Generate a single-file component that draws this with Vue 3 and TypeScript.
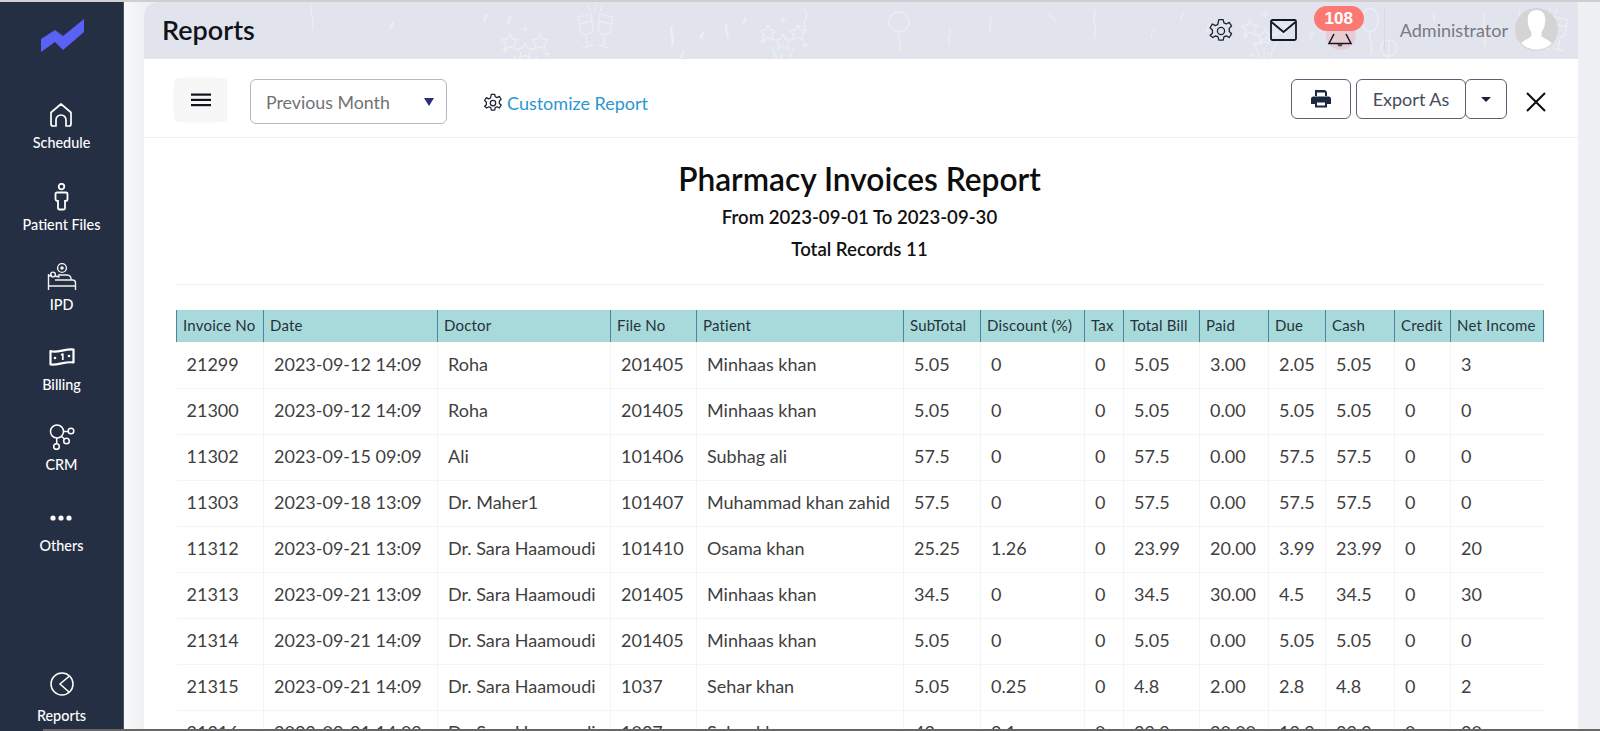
<script setup lang="ts">
const widths: number[] = [87, 174, 173, 86, 207, 77, 104, 39, 76, 69, 57, 69, 56, 93]
const heads: string[] = ['Invoice No', 'Date', 'Doctor', 'File No', 'Patient', 'SubTotal', 'Discount (%)', 'Tax', 'Total Bill', 'Paid', 'Due', 'Cash', 'Credit', 'Net Income']
const rows: string[][] = [
  ['21299', '2023-09-12 14:09', 'Roha', '201405', 'Minhaas khan', '5.05', '0', '0', '5.05', '3.00', '2.05', '5.05', '0', '3'],
  ['21300', '2023-09-12 14:09', 'Roha', '201405', 'Minhaas khan', '5.05', '0', '0', '5.05', '0.00', '5.05', '5.05', '0', '0'],
  ['11302', '2023-09-15 09:09', 'Ali', '101406', 'Subhag ali', '57.5', '0', '0', '57.5', '0.00', '57.5', '57.5', '0', '0'],
  ['11303', '2023-09-18 13:09', 'Dr. Maher1', '101407', 'Muhammad khan zahid', '57.5', '0', '0', '57.5', '0.00', '57.5', '57.5', '0', '0'],
  ['11312', '2023-09-21 13:09', 'Dr. Sara Haamoudi', '101410', 'Osama khan', '25.25', '1.26', '0', '23.99', '20.00', '3.99', '23.99', '0', '20'],
  ['21313', '2023-09-21 13:09', 'Dr. Sara Haamoudi', '201405', 'Minhaas khan', '34.5', '0', '0', '34.5', '30.00', '4.5', '34.5', '0', '30'],
  ['21314', '2023-09-21 14:09', 'Dr. Sara Haamoudi', '201405', 'Minhaas khan', '5.05', '0', '0', '5.05', '0.00', '5.05', '5.05', '0', '0'],
  ['21315', '2023-09-21 14:09', 'Dr. Sara Haamoudi', '1037', 'Sehar khan', '5.05', '0.25', '0', '4.8', '2.00', '2.8', '4.8', '0', '2'],
  ['21316', '2023-09-21 14:09', 'Dr. Sara Haamoudi', '1037', 'Sehar khan', '42', '2.1', '0', '39.9', '20.00', '19.9', '39.9', '0', '20'],
]
const starGroups: number[][] = [[356, 22], [614, 13], [1096, 8]]
const glasses: number[][] = [[431, 3], [1386, 6]]
</script>

<template>
  <div class="page">
    <aside class="side">
      <div class="logo">
        <svg width="44" height="34" viewBox="0 0 44 34"><path d="M0 20 L14 11 L22 17 L43 0 L43 13 L22 31 L14 23 L0 33 Z" fill="#5a62f5"/></svg>
      </div>
      <nav class="nav">
        <a class="item i1">
          <div class="ico"><svg width="24" height="26" viewBox="0 0 24 26" fill="none" stroke="#fff" stroke-width="1.7" stroke-linejoin="round"><path d="M2 10.500 L12 2 L22 10.500 V22 a2 2 0 0 1-2 2 H17 V18 a5 5 0 0 0-10 0 V24 H4 a2 2 0 0 1-2-2 Z"/></svg></div>
          <span>Schedule</span>
        </a>
        <a class="item i2">
          <div class="ico"><svg width="15" height="28" viewBox="0 0 15 28" fill="none" stroke="#fff" stroke-width="1.800"><circle cx="7.500" cy="3.600" r="2.800"/><path d="M3 9.500 H12 a1.500 1.500 0 0 1 1.500 1.500 V16 a2 2 0 0 1-2 2 H11 V25 a1.500 1.500 0 0 1-1.500 1.500 H5.500 A1.500 1.500 0 0 1 4 25 V18 H3.500 a2 2 0 0 1-2-2 V11 A1.500 1.500 0 0 1 3 9.500 Z"/></svg></div>
          <span>Patient Files</span>
        </a>
        <a class="item i3">
          <div class="ico"><svg width="30" height="28" viewBox="0 0 30 28" fill="none" stroke="#f2f2f2" stroke-width="1.400" stroke-linejoin="round"><circle cx="15" cy="5" r="4.400"/><circle cx="15" cy="5" r="1.800" fill="#f2f2f2" stroke="none"/><path d="M1.500 11 V27 M1.500 23 H28.500 M28.500 27 V20 a3 3 0 0 0-3-3 H8 M5 12 L2 13"/><circle cx="6" cy="11.500" r="2.400"/><path d="M8 13 L12 14 a1 1 0 0 1 1-2 H20 a4 4 0 0 1 4 5"/></svg></div>
          <span>IPD</span>
        </a>
        <a class="item i4">
          <div class="ico"><svg width="26" height="18" viewBox="0 0 26 18" fill="none" stroke="#fff" stroke-width="2.200" stroke-linejoin="round"><path d="M1.500 3 C8 5.500 16 .5 24.500 1.500 V14.500 C17 13 9 17.500 1.500 16.500 Z"/><path d="M12 7 L13.800 6 V12" stroke-width="1.700"/><circle cx="6" cy="10" r="1.300" fill="#fff" stroke="none"/><circle cx="20" cy="8" r="1.300" fill="#fff" stroke="none"/></svg></div>
          <span>Billing</span>
        </a>
        <a class="item i5">
          <div class="ico"><svg width="26" height="26" viewBox="0 0 26 26" fill="none" stroke="#fff" stroke-width="1.500"><circle cx="8" cy="7.500" r="6.500"/><circle cx="22" cy="7" r="2.800"/><circle cx="17.500" cy="17" r="2.800"/><circle cx="7.500" cy="22.500" r="2.800"/><path d="M14.500 7.500 H19.200 M12.500 12.500 L15.500 15 M7.700 14 V19.700"/></svg></div>
          <span>CRM</span>
        </a>
        <a class="item i6">
          <div class="ico"><svg width="22" height="6" viewBox="0 0 22 6" fill="#fff"><circle cx="3" cy="3" r="2.600"/><circle cx="11" cy="3" r="2.600"/><circle cx="19" cy="3" r="2.600"/></svg></div>
          <span>Others</span>
        </a>
      </nav>
      <a class="item reports">
        <div class="ico"><svg width="24" height="24" viewBox="0 0 24 24" fill="none" stroke="#fff" stroke-width="1.500"><circle cx="12" cy="12" r="11"/><path d="M19.500 4 L10 12 L19 20"/></svg></div>
        <span>Reports</span>
      </a>
    </aside>

    <main class="main">
      <header class="head">
        <svg class="party" width="1434" height="57" viewBox="0 0 1434 57" fill="none" stroke="#ebedf3" stroke-width="1.400">
          <defs>
            <g id="sparkStars">
              <path d="M10 10 l2.500 5 5.500 .7-4 3.800 1 5.500-5-2.700-5 2.700 1-5.500-4-3.800 5.500-.7Z"/>
              <path d="M40 10 l2.500 5 5.500 .7-4 3.800 1 5.500-5-2.700-5 2.700 1-5.500-4-3.800 5.500-.7Z"/>
              <path d="M25 19 l2.500 5 5.500 .7-4 3.800 1 5.500-5-2.700-5 2.700 1-5.500-4-3.800 5.500-.7Z"/>
              <path d="M24 38 V50 M14 32 C16 38 18 42 20 48 M37 32 C34 38 32 42 30 48 M25 2 V8 M22 5 H28 M2 26 H8 M5 23 V29 M44 30 H50 M47 27 V33"/>
            </g>
            <g id="cheers">
              <path d="M3 12 L16 9 L18 24 a7 7 0 0 1-12 3 Z M5 19 L17 16 M11 31 L13 41 M7 43 L18 40"/>
              <path d="M38 12 L25 9 L23 24 a7 7 0 0 0 12 3 Z M36 19 L24 16 M30 31 L28 41 M34 43 L23 40"/>
              <path d="M20 0 V5 M13 1 L15 6 M27 1 L25 6"/>
            </g>
          </defs>
          <use v-for="(p, i) in starGroups" :key="'s' + i" href="#sparkStars" :x="p[0]" :y="p[1]"/>
          <use v-for="(p, i) in glasses" :key="'g' + i" href="#cheers" :x="p[0]" :y="p[1]"/>
          <path d="M168 4 c-4 6 3 10 1 16 c-1 3-1 5 0 8"/>
          <path d="M250 20 c-2 2-3 4-3 7 M343 12 c-2 2-3 5-2 8 M367 15 c-2 2-3 5-2 8 M528 24 c-3 6 3 10 0 20 M560 30 c-2 2-3 4-3 7 M583 22 c-3 5 2 8 0 14 M600 22 c0-3 1-5 2-6 M540 50 c-2 2-3 3-3 6" stroke-width="2.500"/>
          <path d="M660 8 c4 3 3 8 0 12 c-2 3 3 6 0 12"/>
          <circle cx="755" cy="20" r="10"/><path d="M755 30 c-3 6 4 10 0 20"/>
          <path d="M805 26 c4 6-3 10 1 16 M846 14 c4 6-3 10 1 16 M905 12 l7 8 M950 8 c4 6-3 10 1 16 c2 4-2 7 0 12 M1010 28 c-2 2-3 4-3 8 M1040 10 c-2 2-3 4-3 8 M1066 22 c-2 2-3 4-3 8"/>
          <path d="M1110 44 c8-6 14-10 24-12 M1106 52 l5 2 M1122 50 l4 3" />
          <path d="M1170 30 c-3 2-4 5-4 8"/>
          <ellipse cx="1226" cy="18" rx="8" ry="12"/><path d="M1226 30 c-3 6 4 10 1 22"/>
          <circle cx="1245" cy="46" r="8"/><path d="M1245 38 v14 M1245 52 v5"/>
          <path d="M1290 10 c-2 2 1 6 0 10 M1340 10 c3 6-3 10 1 20 c2 5-2 8 0 14 M1375 8 c2 6-2 10 0 18"/>
        </svg>
        <h1>Reports</h1>
        <div class="tools">
          <svg class="gear" width="26" height="26" viewBox="0 0 24 24" fill="none" stroke="#1b2333" stroke-width="1.200" stroke-linejoin="round"><path d="M10 1.500 h4 l.7 3 2.200 1 2.700-1.500 2.200 3.500-2.200 2 v3 l2.200 2-2.200 3.500-2.700-1.500-2.200 1-.7 3 h-4 l-.7-3-2.200-1-2.700 1.500 L1.900 16 l2.200-2 v-3 l-2.200-2 2.200-3.500 2.700 1.500 2.200-1 Z"/><circle cx="12" cy="12" r="3.300"/></svg>
          <svg class="mail" width="27" height="22" viewBox="0 0 27 22" fill="none" stroke="#11182a" stroke-width="1.800"><rect x="1" y="1" width="25" height="20" rx="1.500"/><path d="M1.500 3 L13.500 13 L25.500 3"/></svg>
          <div class="bell">
            <svg width="26" height="20" viewBox="0 0 26 20" fill="none" stroke="#11182a" stroke-width="1.500"><path d="M7 2 L2 11.500 H24 L19 2"/><path d="M10.500 12 a2.500 2.500 0 0 0 5 0 Z" fill="#54504c" stroke="none"/></svg>
            <span class="badge">108</span>
          </div>
          <span class="sep"></span>
          <span class="admin">Administrator</span>
          <div class="avatar">
            <svg width="43" height="43" viewBox="0 0 42 42"><circle cx="21" cy="21" r="21" fill="#d4d4d4"/><path d="M21 2 c6 0 9 4 8.500 11 c-.3 5-1.500 8-3.500 10.500 v4 c2 2 7 3.500 10 7 a21 21 0 0 1-30 0 c3-3.500 8-5 10-7 v-4 c-2-2.500-3.200-5.500-3.500-10.500 C12 6 15 2 21 2Z" fill="#fff"/></svg>
          </div>
        </div>
      </header>

      <section class="bar">
        <button class="burger">
          <svg width="20" height="14" viewBox="0 0 20 14" fill="#11141c"><rect y="0.500" width="20" height="2.200"/><rect y="5.800" width="20" height="2.200"/><rect y="11" width="20" height="2.200"/></svg>
        </button>
        <div class="select">
          <span>Previous Month</span>
          <i class="tri"></i>
        </div>
        <a class="customize">
          <svg width="20" height="20" viewBox="0 0 24 24" fill="none" stroke="#1b2333" stroke-width="1.500" stroke-linejoin="round"><path d="M10 1.500 h4 l.7 3 2.200 1 2.700-1.500 2.200 3.500-2.200 2 v3 l2.200 2-2.200 3.500-2.700-1.500-2.200 1-.7 3 h-4 l-.7-3-2.200-1-2.700 1.500 L1.900 16 l2.200-2 v-3 l-2.200-2 2.200-3.500 2.700 1.500 2.200-1 Z"/><circle cx="12" cy="12" r="3.300"/></svg>
          <span>Customize Report</span>
        </a>
        <div class="actions">
          <button class="btn print">
            <svg width="20" height="18" viewBox="0 0 20 18" fill="#1c2740"><path d="M4 0 H14 L16 2 V6 H14 V2.500 H6 V6 H4 Z"/><path d="M2.500 6.500 H17.500 A2.500 2.500 0 0 1 20 9 V14 H16 V17.500 H4 V14 H0 V9 A2.500 2.500 0 0 1 2.500 6.500 Z M6 12.500 V15.500 H14 V12.500 Z" fill-rule="evenodd"/></svg>
          </button>
          <button class="btn export">Export As</button>
          <button class="btn caret"><i></i></button>
          <svg class="close" width="20" height="20" viewBox="0 0 20 20" stroke="#0c0c0c" stroke-width="2"><path d="M1 1 L19 19 M19 1 L1 19"/></svg>
        </div>
      </section>

      <section class="report">
        <div class="title">
          <h2>Pharmacy Invoices Report</h2>
          <p>From 2023-09-01 To 2023-09-30</p>
          <p>Total Records 11</p>
        </div>
        <table>
          <colgroup><col v-for="(w, i) in widths" :key="i" :style="{ width: w + 'px' }" /></colgroup>
          <thead><tr><th v-for="h in heads" :key="h">{{ h }}</th></tr></thead>
          <tbody>
            <tr v-for="r in rows" :key="r[0]"><td v-for="(v, i) in r" :key="i">{{ v }}</td></tr>
          </tbody>
        </table>
      </section>
    </main>
    <div class="chrome-top"></div>
    <div class="chrome-bottom"></div>
  </div>
</template>

<style>
html, body { margin: 0; height: 100%; overflow: hidden; }
</style>

<style scoped>
.page { position: relative; display: flex; height: 731px; overflow: hidden; background: linear-gradient(90deg, #f8f9fa 124px, #eff0f3 144px); font-family: "Lato", "Open Sans", sans-serif; color: #2c2c2c; }
.chrome-top { position: absolute; left: 0; right: 0; top: 0; height: 2px; background: #cfcfcf; }
.chrome-bottom { position: absolute; left: 43px; right: 0; bottom: 0; height: 2px; background: #666; }
.side { width: 124px; flex: none; box-sizing: border-box; background: #252f43; color: #fff; display: flex; flex-direction: column; align-items: center; padding-top: 19px; border-right: 1px solid #4a5262; }
.logo { height: 34px; margin-left: 3px; }
.nav { display: flex; flex-direction: column; align-items: center; margin-top: 47px; flex: 1; }
.item { display: flex; flex-direction: column; align-items: center; font-size: 14.400px; line-height: 18px; font-weight: 500; }
.item span { display: block; margin-top: 4px; }
.ico { height: 30px; display: flex; align-items: center; justify-content: center; }
.i1 { height: 82px; }
.i2 { height: 80px; }
.i3 { height: 80px; }
.i4 { height: 80px; }
.i5 { height: 81px; }
.reports { margin-bottom: 6px; }
.reports span { margin-top: 8px; }
.main { width: 1434px; flex: none; margin-left: 20px; margin-top: 2px; background: #fff; display: flex; flex-direction: column; overflow: hidden; border-top-left-radius: 14px; }
.head { position: relative; height: 57px; flex: none; box-sizing: border-box; background: #e1e4ed; display: flex; align-items: center; padding: 0 20px 0 18px; overflow: hidden; }
.head h1 { position: relative; margin: -2px 0 0; font-size: 27px; font-weight: 600; color: #10131a; }
.party { position: absolute; left: 0; top: 0; }
.tools { position: relative; margin-left: auto; display: flex; align-items: center; }
.gear { margin-right: 36px; }
.mail { margin-right: 30px; margin-top: -2px; }
.bell { position: relative; width: 30px; height: 30px; border-radius: 50%; background: #e8ccd3; display: flex; justify-content: center; align-items: flex-start; margin-top: 9px; margin-right: 28px; margin-left: -1px; }
.bell svg { flex: none; margin-top: 12px; margin-left: -1px; }
.badge { position: absolute; left: -12px; top: -14px; width: 50px; height: 25px; border-radius: 13px; background: #fb7873; color: #fff; font-family: "Liberation Sans", sans-serif; font-weight: 700; font-size: 17px; line-height: 25px; text-align: center; }
.sep { width: 1px; height: 42px; background: #d6d9e4; margin-right: 15px; margin-top: -3px; }
.admin { font-size: 18px; color: #777a80; margin-top: -1px; }
.avatar { width: 43px; height: 43px; margin-left: 7px; margin-top: -2px; }
.bar { height: 79px; flex: none; box-sizing: border-box; display: flex; align-items: flex-start; padding: 20px 32px 0 31px; border-bottom: 1px solid #efefef; }
.burger { width: 51px; height: 42px; background: #f7f7f7; border: 0; border-radius: 4px; box-shadow: 0 0 2px rgba(0,0,0,.15); display: flex; align-items: center; justify-content: center; padding: 0; }
.select { width: 197px; height: 45px; margin-left: 24px; box-sizing: border-box; border: 1px solid #b5b5c3; border-radius: 6px; display: flex; align-items: center; justify-content: space-between; padding: 0 12px 0 15px; font-size: 17.800px; color: #6f7275; }
.tri { width: 0; height: 0; border-left: 5px solid transparent; border-right: 5px solid transparent; border-top: 8px solid #2c2c7a; }
.customize { display: flex; align-items: center; height: 48px; margin-left: 36px; color: #2b97d0; font-size: 18px; gap: 4px; }
.actions { margin-left: auto; display: flex; align-items: flex-start; }
.btn { height: 40px; box-sizing: border-box; border: 1px solid #5a6170; border-radius: 6px; background: #fff; display: flex; align-items: center; justify-content: center; padding: 0; font: inherit; font-size: 18px; color: #454c5a; }
.print { width: 60px; margin-right: 5px; }
.export { width: 110px; }
.caret { width: 42px; margin-left: -1px; }
.caret i { width: 0; height: 0; border-left: 5px solid transparent; border-right: 5px solid transparent; border-top: 5px solid #1c2233; }
.close { margin-left: 19px; margin-top: 13px; }
.report { padding: 0 35px 0 32px; }
.title { text-align: center; height: 147px; border-bottom: 1px solid #eee; box-sizing: border-box; padding-top: 21px; }
.title h2 { margin: 0 0 7px; font-size: 31.700px; line-height: 40px; font-weight: 600; color: #0d0d0d; }
.title p { margin: 0 0 10px; font-size: 18.600px; line-height: 22px; font-weight: 600; color: #111; }
table { border-collapse: collapse; table-layout: fixed; width: 1367px; margin-top: 25px; }
th { height: 32px; padding: 0 0 2px 6px; background: #a9dadb; border-left: 1px solid #4f84a0; font-size: 15px; letter-spacing: 0.2px; font-weight: 400; color: #26323a; text-align: left; white-space: nowrap; overflow: hidden; box-sizing: border-box; }
th:last-child { border-right: 1px solid #4f84a0; }
td { height: 46px; padding: 0 0 2px 10px; box-sizing: border-box; border: 1px solid #f4f4f4; border-top: 0; font-size: 18px; color: #3f3f3f; white-space: nowrap; overflow: hidden; }
td:first-child, td:last-child { border-left: 0; border-right: 0; }
</style>
